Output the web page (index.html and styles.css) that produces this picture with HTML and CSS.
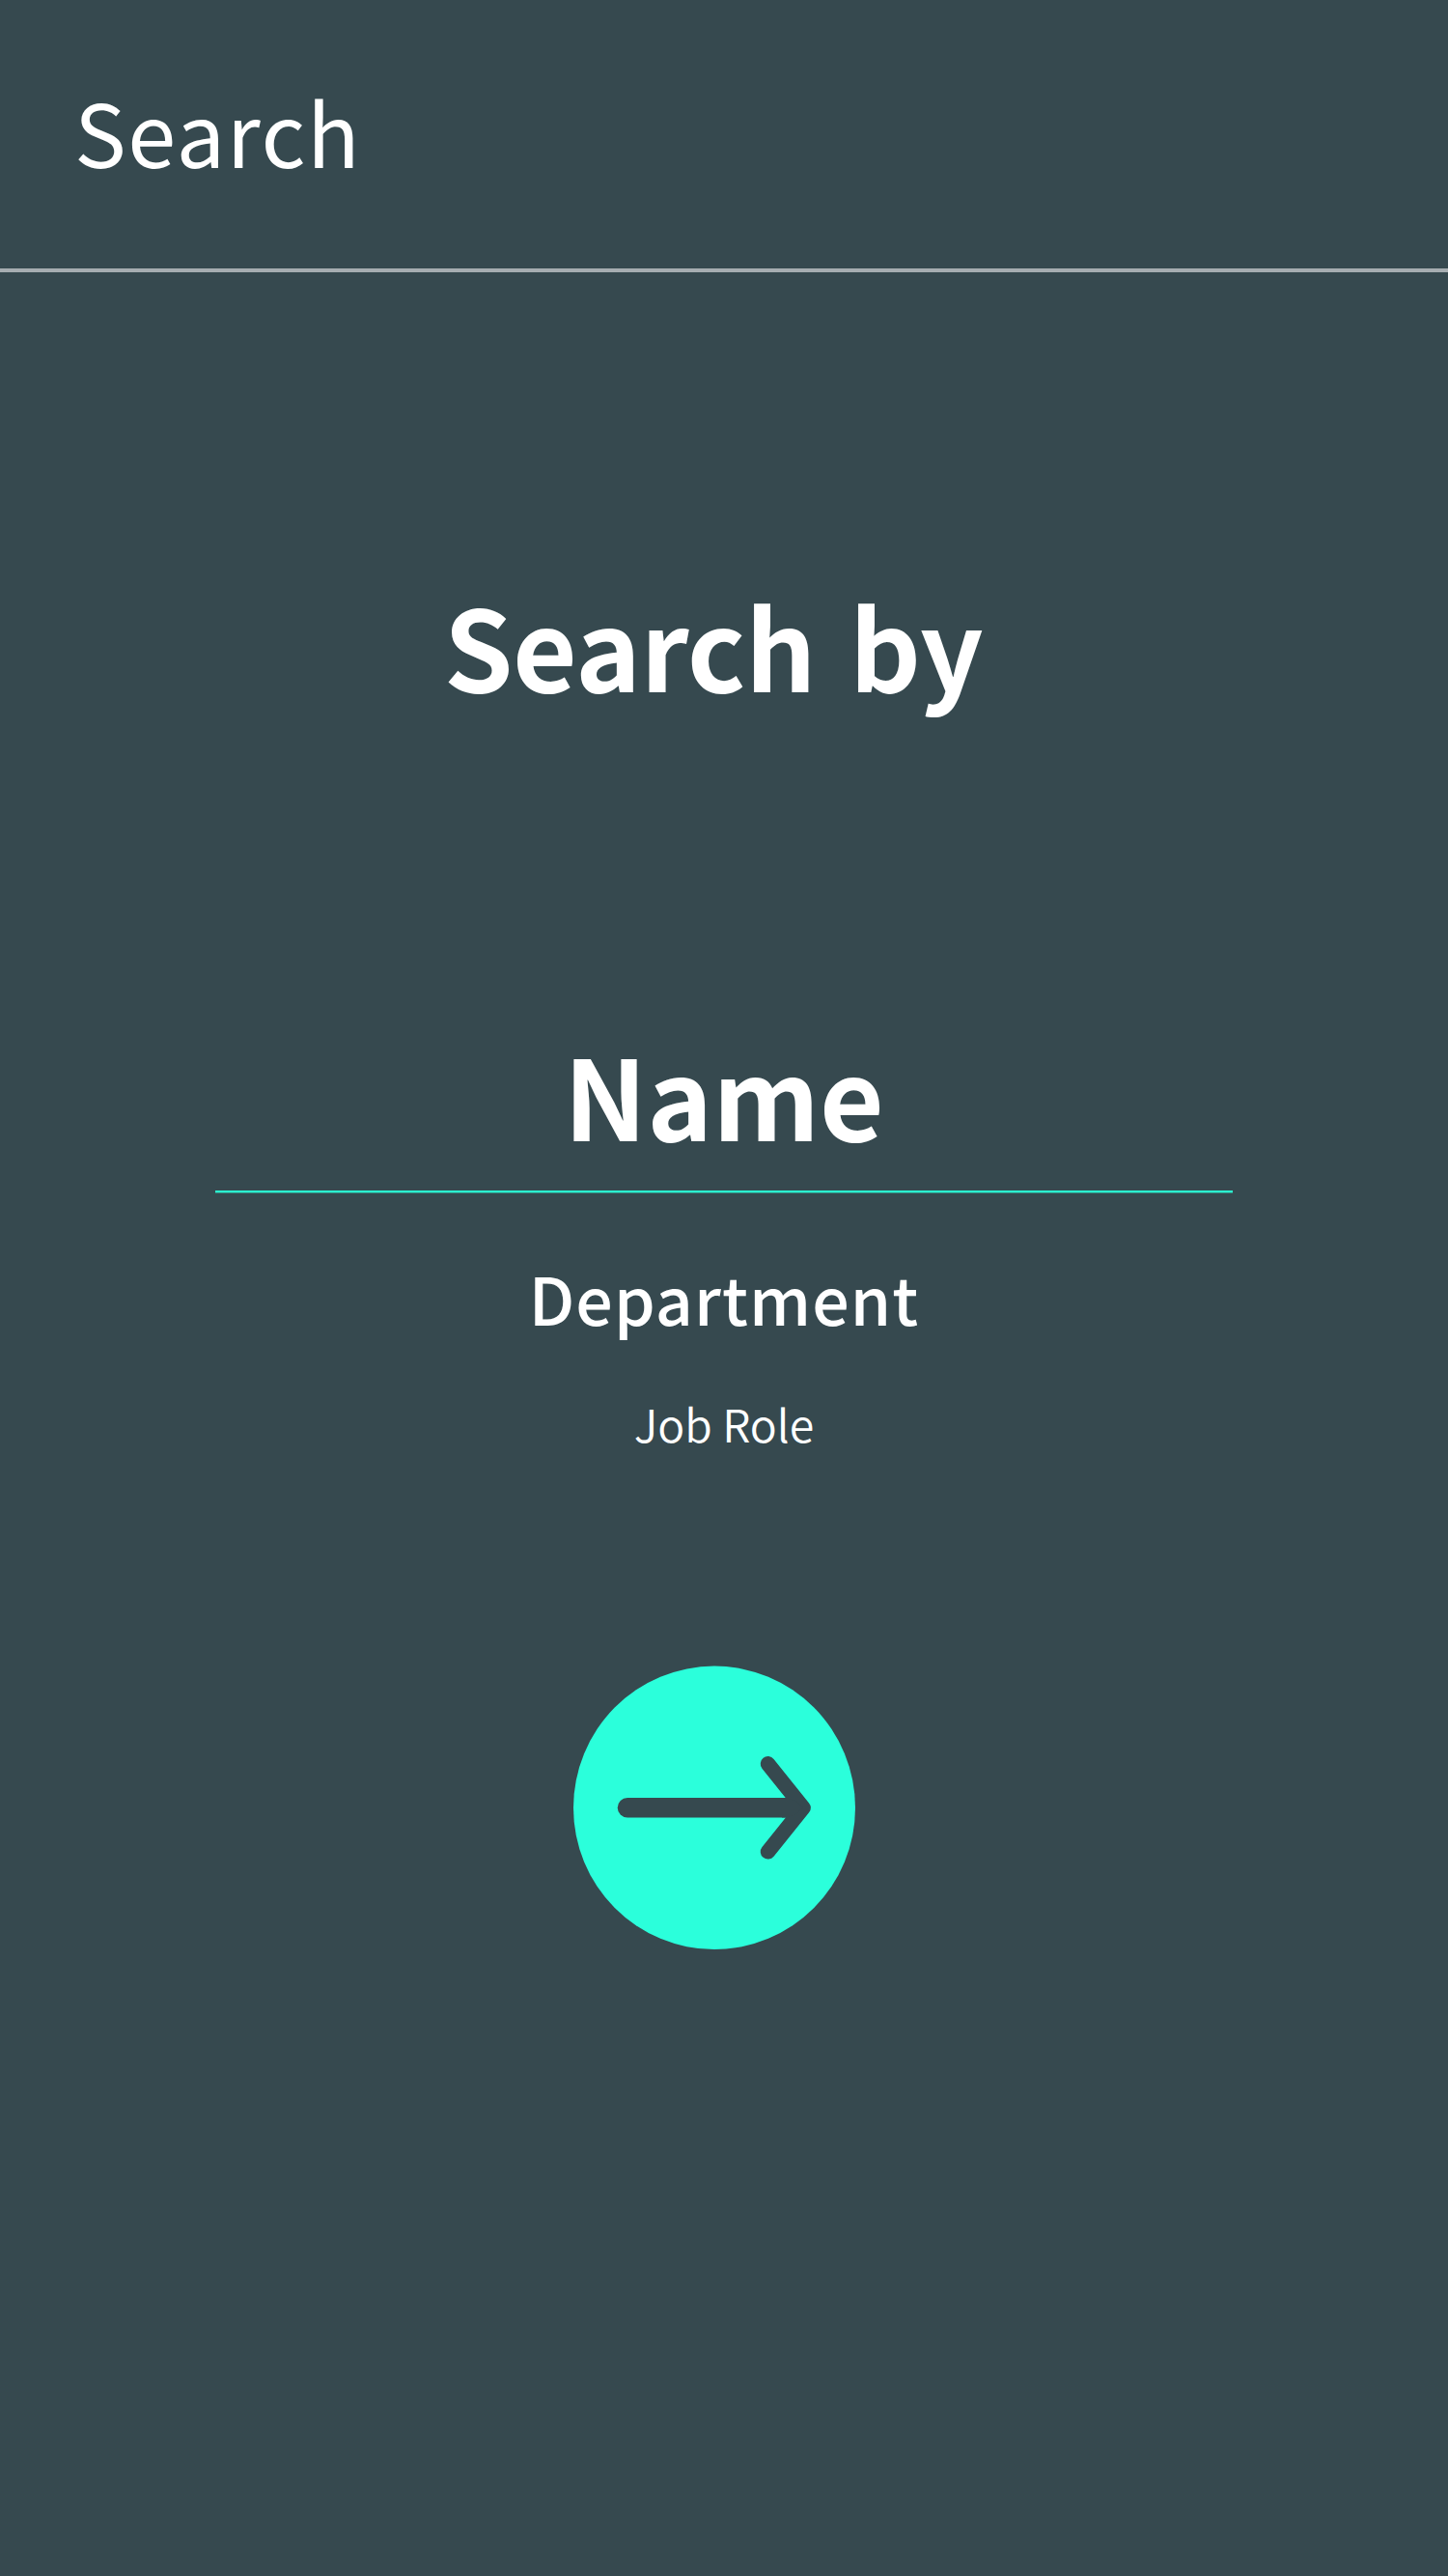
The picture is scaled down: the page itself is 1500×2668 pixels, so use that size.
FILE: index.html
```
<!DOCTYPE html>
<html lang="en">
    <head>
        <meta charset="utf-8">
        <meta name="viewport" content="width=device-width, initial-scale=1">
        <title>Search</title>

        <link rel="stylesheet" href="styles.css">
    </head>

    <body>
        <header class="top-bar">
            <h1>Search</h1>
        </header>

        <main class="search">
            <h2 class="search-title">Search by</h2>

            <ul class="search-options">
                <li class="option option-selected">Name</li>
                <li class="option option-next">Department</li>
                <li class="option option-last">Job Role</li>
            </ul>

            <button class="search-submit" type="button" aria-label="Search">
                <svg viewBox="0 0 292 294" width="292" height="294">
                    <ellipse class="disc" cx="146" cy="147.3" rx="146" ry="146.7"/>
                    <path class="shaft" d="M56 147.3H222"/>
                    <path class="head" d="M201.5 101.8L238 147.3L201.5 192.8"/>
                    <path class="tip" d="M216 137H219.5L230 140L238 147.3L230 154L219.5 157.5H216Z"/>
                </svg>
            </button>
        </main>
    </body>
</html>
```
FILE: styles.css
```
/* base */
body {
    margin: 0;
    min-height: 2668px;
    background-color: #36494f;
    color: #fff;
    font-family: "Noto Sans CJK JP", "Noto Sans", sans-serif;
}

h1,
h2,
ul {
    margin: 0;
    padding: 0;
    font-weight: normal;
}

/* header */
.top-bar {
    box-sizing: border-box;
    height: 282px;
    padding: 70px 0 0 77px;
    border-bottom: 4px solid #a6adb1;
}

.top-bar h1 {
    font-size: 90px;
    font-weight: 400;
    letter-spacing: 1.7px;
    line-height: 130px;
}

/* search form */
.search {
    display: flex;
    flex-direction: column;
    align-items: center;
}

.search-title {
    margin-top: 297px;
    margin-right: 22px;
    font-size: 115px;
    font-weight: 700;
    letter-spacing: -0.4px;
    word-spacing: 9px;
    line-height: 176px;
}

.search-options {
    display: flex;
    flex-direction: column;
    width: 1054px;
    margin-top: 295px;
    list-style: none;
}

.option {
    text-align: center;
}

.option-selected {
    height: 183px;
    border-bottom: 2px solid #2bf2d0;
    box-shadow: 0 1px 0 #329284;
    font-size: 115px;
    font-weight: 700;
    line-height: 164px;
}

.option-next {
    margin-top: 59px;
    font-size: 68px;
    font-weight: 500;
    letter-spacing: 1.1px;
    line-height: 100px;
}

.option-last {
    margin-top: 40px;
    font-size: 46.5px;
    font-weight: 350;
    line-height: 80px;
}

/* round arrow button */
.search-submit {
    margin: 211px 20px 0 0;
    padding: 0;
    border: none;
    background: none;
    cursor: pointer;
}

.search-submit svg {
    display: block;
}

.disc {
    fill: #2bffdb;
}

.shaft,
.head {
    fill: none;
    stroke: #36494f;
    stroke-linecap: round;
    stroke-linejoin: round;
}

.shaft {
    stroke-width: 20.5;
}

.head {
    stroke-width: 15.5;
}

.tip {
    fill: #36494f;
}
```
